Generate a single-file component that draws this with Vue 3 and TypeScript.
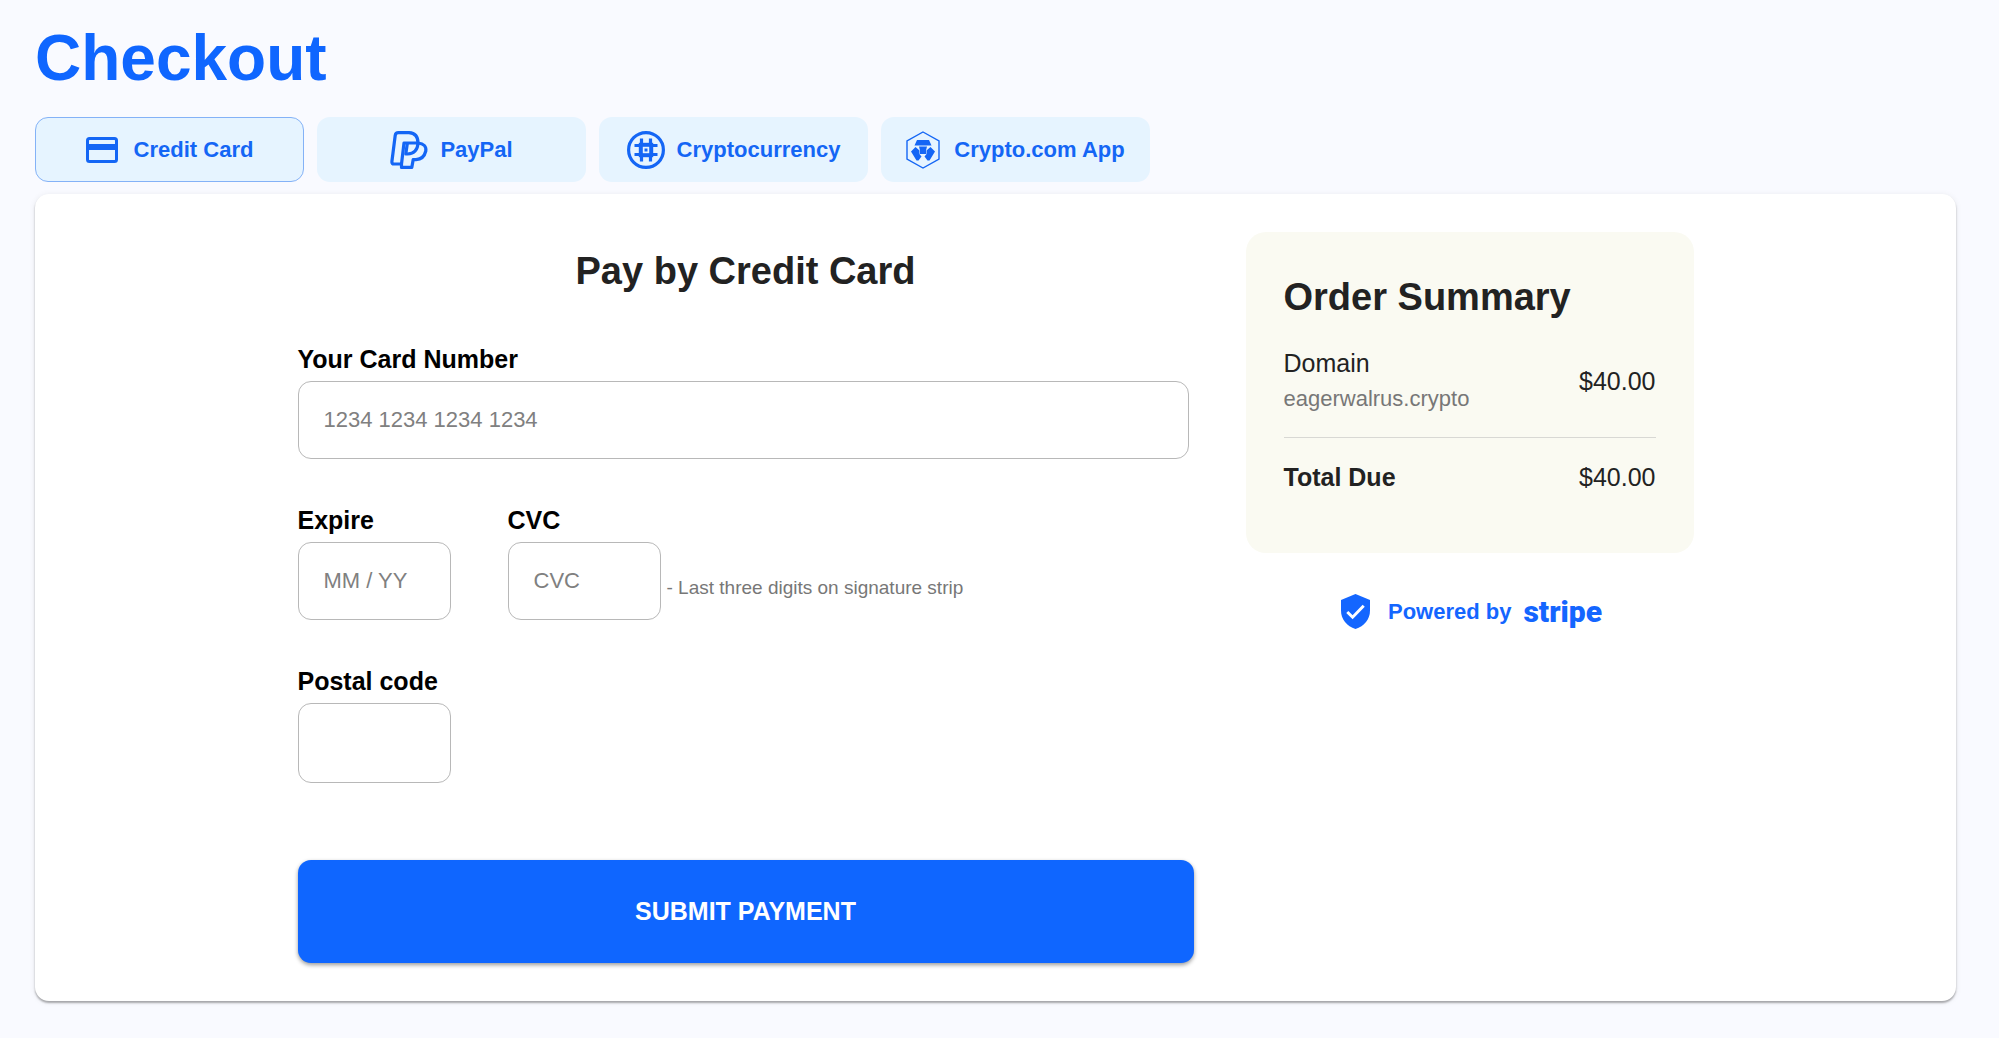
<script setup lang="ts">
import { ref } from 'vue'

type Method = { id: string; label: string }

const methods: Method[] = [
  { id: 'card', label: 'Credit Card' },
  { id: 'paypal', label: 'PayPal' },
  { id: 'crypto', label: 'Cryptocurrency' },
  { id: 'cdc', label: 'Crypto.com App' },
]
const selected = ref('card')
const cardNumber = ref('')
const expire = ref('')
const cvc = ref('')
const postal = ref('')
</script>

<template>
  <main class="page">
    <h1>Checkout</h1>

    <nav class="tabs" aria-label="Payment method">
      <button
        v-for="m in methods"
        :key="m.id"
        type="button"
        class="tab"
        :class="{ active: selected === m.id }"
        :aria-pressed="selected === m.id"
        @click="selected = m.id"
      >
        <svg v-if="m.id === 'card'" class="icon-card" viewBox="0 0 32 26" aria-hidden="true">
          <rect x="1.5" y="1.5" width="29" height="23" rx="2" fill="none" stroke="currentColor" stroke-width="3" />
          <rect x="1" y="7" width="30" height="6" fill="currentColor" />
        </svg>
        <svg v-else-if="m.id === 'paypal'" class="icon-large" viewBox="0 0 38 38" fill="none" stroke="currentColor" stroke-width="3.2" stroke-linejoin="round" aria-hidden="true">
          <path d="M12 33H4Q1.600 33 1.900 30.500L5.200 4.500Q5.600 1.700 8.500 1.700H19Q28 2.200 28 12Q27.500 22.500 17.500 23H15.800L17.300 12.500" />
          <path d="M11.500 33L14 12H28Q36.800 13 35.800 20Q33.800 28.200 26 28.600H23.200L21.800 36.400H11.500Z" />
        </svg>
        <svg v-else-if="m.id === 'crypto'" class="icon-large" viewBox="0 0 38 38" fill="none" stroke="currentColor" aria-hidden="true">
          <circle cx="19" cy="19" r="17.4" stroke-width="3.2" />
          <rect x="13.800" y="13.800" width="10.400" height="10.400" stroke-width="4" />
          <path d="M14.500 7.500V14M23.500 7.500V14M14.500 24V30.500M23.500 24V30.500M7.500 14.500H14M7.500 23.500H14M24 14.500H30.500M24 23.500H30.500" stroke-width="3.200" />
          <rect x="17.500" y="17.500" width="3" height="3" fill="currentColor" stroke="none" />
        </svg>
        <svg v-else class="icon-hex" viewBox="0 0 34 38" aria-hidden="true">
          <path d="M17 1L33 10V28L17 37L1 28V10Z" fill="none" stroke="currentColor" stroke-width="1.400" />
          <path d="M11 9H23L25.500 14.500H8.500ZM13 15.500H21L20 19.500L20.500 23H13.500L14 19.500ZM9.500 16L13.500 19.500L13 22.500L15.500 25.500L12.500 29.500H10.500L5 20.500ZM24.500 16L20.500 19.500L21 22.500L18.500 25.500L21.500 29.500H23.500L29 20.500Z" fill="currentColor" />
        </svg>
        <span>{{ m.label }}</span>
      </button>
    </nav>

    <section class="panel">
      <form class="form" @submit.prevent>
        <h2>Pay by Credit Card</h2>

        <div class="field">
          <label for="card-number">Your Card Number</label>
          <input id="card-number" v-model="cardNumber" class="wide" type="text" placeholder="1234 1234 1234 1234" />
        </div>

        <div class="row">
          <div class="field">
            <label for="expire">Expire</label>
            <input id="expire" v-model="expire" type="text" placeholder="MM / YY" />
          </div>
          <div class="field">
            <label for="cvc">CVC</label>
            <div class="with-hint">
              <input id="cvc" v-model="cvc" type="text" placeholder="CVC" aria-describedby="cvc-hint" />
              <span id="cvc-hint" class="hint">- Last three digits on signature strip</span>
            </div>
          </div>
        </div>

        <div class="field">
          <label for="postal">Postal code</label>
          <input id="postal" v-model="postal" class="tall" type="text" />
        </div>

        <button type="submit" class="submit">SUBMIT PAYMENT</button>
      </form>

      <aside class="side">
        <div class="summary">
          <h3>Order Summary</h3>
          <div class="item">
            <div>
              <div>Domain</div>
              <div class="domain">eagerwalrus.crypto</div>
            </div>
            <span>$40.00</span>
          </div>
          <div class="item total">
            <strong>Total Due</strong>
            <span>$40.00</span>
          </div>
        </div>
        <div class="powered">
          <svg class="shield" viewBox="0 0 30 36" aria-hidden="true">
            <path d="M15 0L30 6V17C30 26 24 33.500 15 36C6 33.500 0 26 0 17V6Z" fill="currentColor" />
            <path d="M6.500 18.500L12 24L23.500 12" fill="none" stroke="#fff" stroke-width="3" />
          </svg>
          <span class="by">Powered by</span>
          <span class="stripe">stripe</span>
        </div>
      </aside>
    </section>
  </main>
</template>

<style>
body {
  background: #f9faff;
}
</style>

<style scoped>
* {
  box-sizing: border-box;
}
.page {
  padding: 8px 43px 35px 35px;
  font-family: "Liberation Sans", Arial, sans-serif;
  font-size: 25px;
  line-height: 32px;
  color: #222;
}
h1,
h2,
h3 {
  margin: 0;
  font-weight: 700;
}
h1 {
  padding-top: 10px;
  font-size: 64px;
  line-height: 80px;
  color: #0f66ff;
}
button,
input {
  font-family: inherit;
}
.tabs {
  display: flex;
  flex-wrap: wrap;
  gap: 13px;
  margin: 19px 0 12px;
}
.tab {
  display: flex;
  align-items: center;
  justify-content: center;
  gap: 12px;
  width: 269px;
  height: 65px;
  padding: 0;
  border: 1px solid transparent;
  border-radius: 13px;
  background: #e6f4ff;
  color: #1466f5;
  font-size: 22px;
  font-weight: 700;
  cursor: pointer;
}
.tab.active {
  border-color: #84b2f7;
}
.icon-card {
  width: 32px;
  height: 26px;
  margin-right: 4px;
}
.icon-large {
  width: 38px;
  height: 38px;
}
.icon-hex {
  width: 34px;
  height: 38px;
  margin-right: 2px;
}
.panel {
  display: grid;
  grid-template-columns: minmax(0, 896px) minmax(0, 448px);
  justify-content: center;
  gap: 52px;
  padding: 38px;
  border-radius: 14px;
  background: #fff;
  box-shadow: 0 2px 2px rgba(0, 0, 0, 0.3), 0 1px 6px rgba(0, 0, 0, 0.08);
}
h2 {
  padding-top: 15px;
  font-size: 38px;
  line-height: 48px;
  text-align: center;
}
.form {
  display: flex;
  flex-direction: column;
}
.field {
  display: flex;
  flex-direction: column;
  align-items: flex-start;
  gap: 6px;
}
h2 + .field {
  margin-top: 48px;
}
.row,
.row + .field {
  margin-top: 45px;
}
.row {
  display: flex;
  gap: 57px;
}
label {
  color: #000;
  font-weight: 700;
}
input {
  width: 153px;
  height: 78px;
  padding: 0 25px;
  border: 1px solid #b8b8b8;
  border-radius: 13px;
  background: #fff;
  color: #222;
  font-size: 22px;
}
input.wide {
  width: calc(100% - 5px);
}
input.tall {
  height: 80px;
}
input::placeholder {
  color: #808080;
  opacity: 1;
}
.with-hint {
  display: flex;
  align-items: center;
  gap: 6px;
}
.hint {
  padding-top: 14px;
  color: #777;
  font-size: 19px;
}
.submit {
  height: 103px;
  margin-top: 77px;
  border: 0;
  border-radius: 13px;
  background: #0f66ff;
  box-shadow: 0 2px 4px rgba(0, 0, 0, 0.4);
  color: #fff;
  font-size: 25px;
  font-weight: 700;
  cursor: pointer;
}
.summary {
  padding: 38px;
  border-radius: 20px;
  background: #fafaf2;
}
h3 {
  padding: 3px 0 2px;
  font-size: 38px;
  line-height: 48px;
}
.item {
  display: flex;
  align-items: center;
  justify-content: space-between;
  margin-top: 24px;
}
.domain {
  padding-top: 4px;
  color: #777;
  font-size: 22px;
}
.total {
  margin-top: 22px;
  padding: 23px 0 22px;
  border-top: 1px solid #d8d8d4;
}
.powered {
  display: flex;
  align-items: center;
  justify-content: center;
  margin-top: 41px;
  padding-left: 4px;
  color: #1466ff;
}
.shield {
  width: 29px;
  height: 35px;
  margin-right: 18px;
}
.by {
  margin-right: 12px;
  font-size: 22px;
  font-weight: 700;
}
.stripe {
  font-family: Roboto, sans-serif;
  font-size: 30px;
  font-weight: 900;
}
</style>
